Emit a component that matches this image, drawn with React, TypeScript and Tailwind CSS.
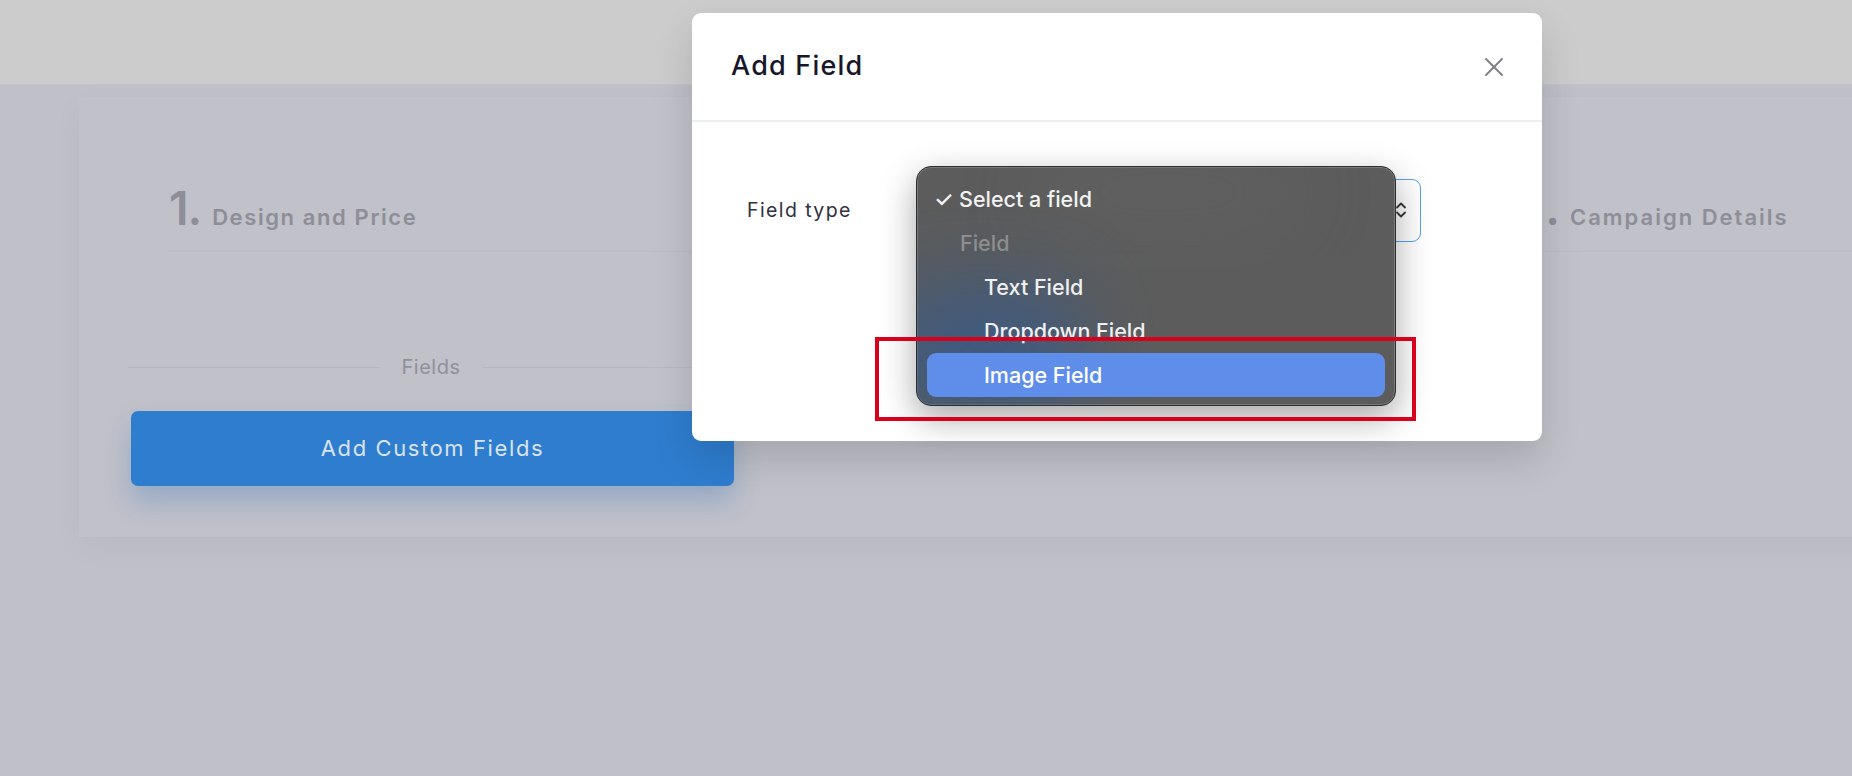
import React from "react";

const POP = { fontFamily: "Inter, 'Open Sans', sans-serif" } as React.CSSProperties;
const SYS = { fontFamily: "Inter, 'Noto Sans', sans-serif" } as React.CSSProperties;

function ChevronUpDown() {
  return (
    <svg width="14" height="20" viewBox="0 0 14 20" fill="none" stroke="#3a3a3a" strokeWidth="1.8" strokeLinecap="round" strokeLinejoin="round">
      <path d="M3 7.5 L7 3.5 L11 7.5" />
      <path d="M3 12.5 L7 16.5 L11 12.5" />
    </svg>
  );
}

function CloseX() {
  return (
    <svg width="20" height="20" viewBox="0 0 20 20" fill="none" stroke="#7f7f85" strokeWidth="2" strokeLinecap="round">
      <path d="M2 2 L18 18" />
      <path d="M18 2 L2 18" />
    </svg>
  );
}

export default function App() {
  return (
    <div className="relative h-[776px] w-full overflow-hidden bg-[#bfc0c8]" style={POP}>
      {/* top bar */}
      <div className="h-[85px] w-full bg-[#cccccc] border-b border-[#c4c4c6]" />

      {/* card */}
      <div className="ml-[79px] mt-[12px] h-[440px] w-[1850px] border border-[#c1c2c9] bg-[#c0c1c9] shadow-[0_10px_30px_rgba(0,0,0,0.04)]">
        {/* steps */}
        <div className="ml-[89px] mt-[92px] flex h-[62px] items-start border-b border-[#babbc3] text-[#8d8e98]">
          <div className="flex w-[1345px] items-baseline">
            <span className="text-[46px] font-semibold leading-[36px] tracking-[-1px]">1.</span>
            <span className="ml-[11px] text-[22px] font-semibold tracking-[1.6px]">Design and Price</span>
          </div>
          <div className="flex items-baseline">
            <span className="text-[46px] font-semibold leading-[36px] tracking-[3px]">3.</span>
            <span className="ml-[7px] text-[22px] font-semibold tracking-[2px]">Campaign Details</span>
          </div>
        </div>

        {/* fields column */}
        <div className="ml-[48px] mt-[103px] w-[606px]">
          <div className="flex items-center">
            <div className="h-px flex-1 bg-[#b6b7bf]" />
            <span className="px-[22px] text-[20px] leading-[24px] tracking-[0.5px] text-[#8f9099]">Fields</span>
            <div className="h-px flex-1 bg-[#b6b7bf]" />
          </div>
          <button className="ml-[3px] mt-[32px] flex h-[75px] w-[603px] items-center justify-center rounded-[7px] bg-[#2f7dcf] text-[22px] tracking-[1.6px] text-[#d9e3f0] shadow-[0_16px_26px_rgba(47,110,190,0.28)]">
            Add Custom Fields
          </button>
        </div>
      </div>

      {/* modal */}
      <div className="absolute left-[692px] top-[13px] h-[428px] w-[850px] rounded-[9px] bg-white shadow-[0_18px_40px_rgba(0,0,0,0.14)]">
        <div className="flex h-[109px] items-center justify-between border-b-2 border-[#eceef1] pl-[39px] pr-[38px]">
          <span className="text-[27px] font-medium tracking-[1.2px] text-[#17172b]">Add Field</span>
          <CloseX />
        </div>
        <div className="flex pl-[55px] pt-[57px]">
          <div className="flex h-[63px] w-[169px] items-center text-[19.5px] tracking-[1.4px] text-[#303040]">Field type</div>
          <div className="relative h-[63px] w-[505px] rounded-[9px] border-[1.5px] border-[#5a9fef]">
            <div className="absolute right-[12px] top-[20px]">
              <ChevronUpDown />
            </div>

            {/* native-looking popup */}
            <div
              className="absolute -left-[1px] -top-[14px] h-[240px] w-[480px] overflow-hidden rounded-[15px] border border-[#2e2e2e] bg-[#5c5c5c] shadow-[0_12px_34px_rgba(0,0,0,0.35),inset_0_0_0_1px_rgba(255,255,255,0.18)]"
              style={SYS}
            >
              <div className="absolute left-[-30px] top-[120px] h-[130px] w-[190px] rounded-[30px] bg-[#355a8c] opacity-75 blur-2xl" />
              <div className="absolute left-[120px] top-[-10px] h-[70px] w-[260px] rounded-full bg-[#6a6a6a] opacity-40 blur-2xl" />
              <div className="relative flex flex-col px-[10px] py-[10px] text-[21.5px] font-medium">
                <div className="flex h-[44px] items-center pl-[7px] text-[#f2f2f2]">
                  <span className="w-[25px] text-[22px]">✓</span>
                  <span>Select a field</span>
                </div>
                <div className="flex h-[44px] items-center pl-[33px] text-[#8e8e8e]">Field</div>
                <div className="flex h-[44px] items-center pl-[57px] text-[#f0f0f0]">Text Field</div>
                <div className="flex h-[44px] items-center pl-[57px] text-[#f0f0f0]">Dropdown Field</div>
                <div className="flex h-[44px] items-center rounded-[9px] bg-[#5f8eea] pl-[57px] text-white">Image Field</div>
              </div>
            </div>
          </div>
        </div>
      </div>

      {/* red annotation box */}
      <div className="absolute left-[875px] top-[337px] h-[84px] w-[541px] border-[4px] border-[#d7001d]" />
    </div>
  );
}
